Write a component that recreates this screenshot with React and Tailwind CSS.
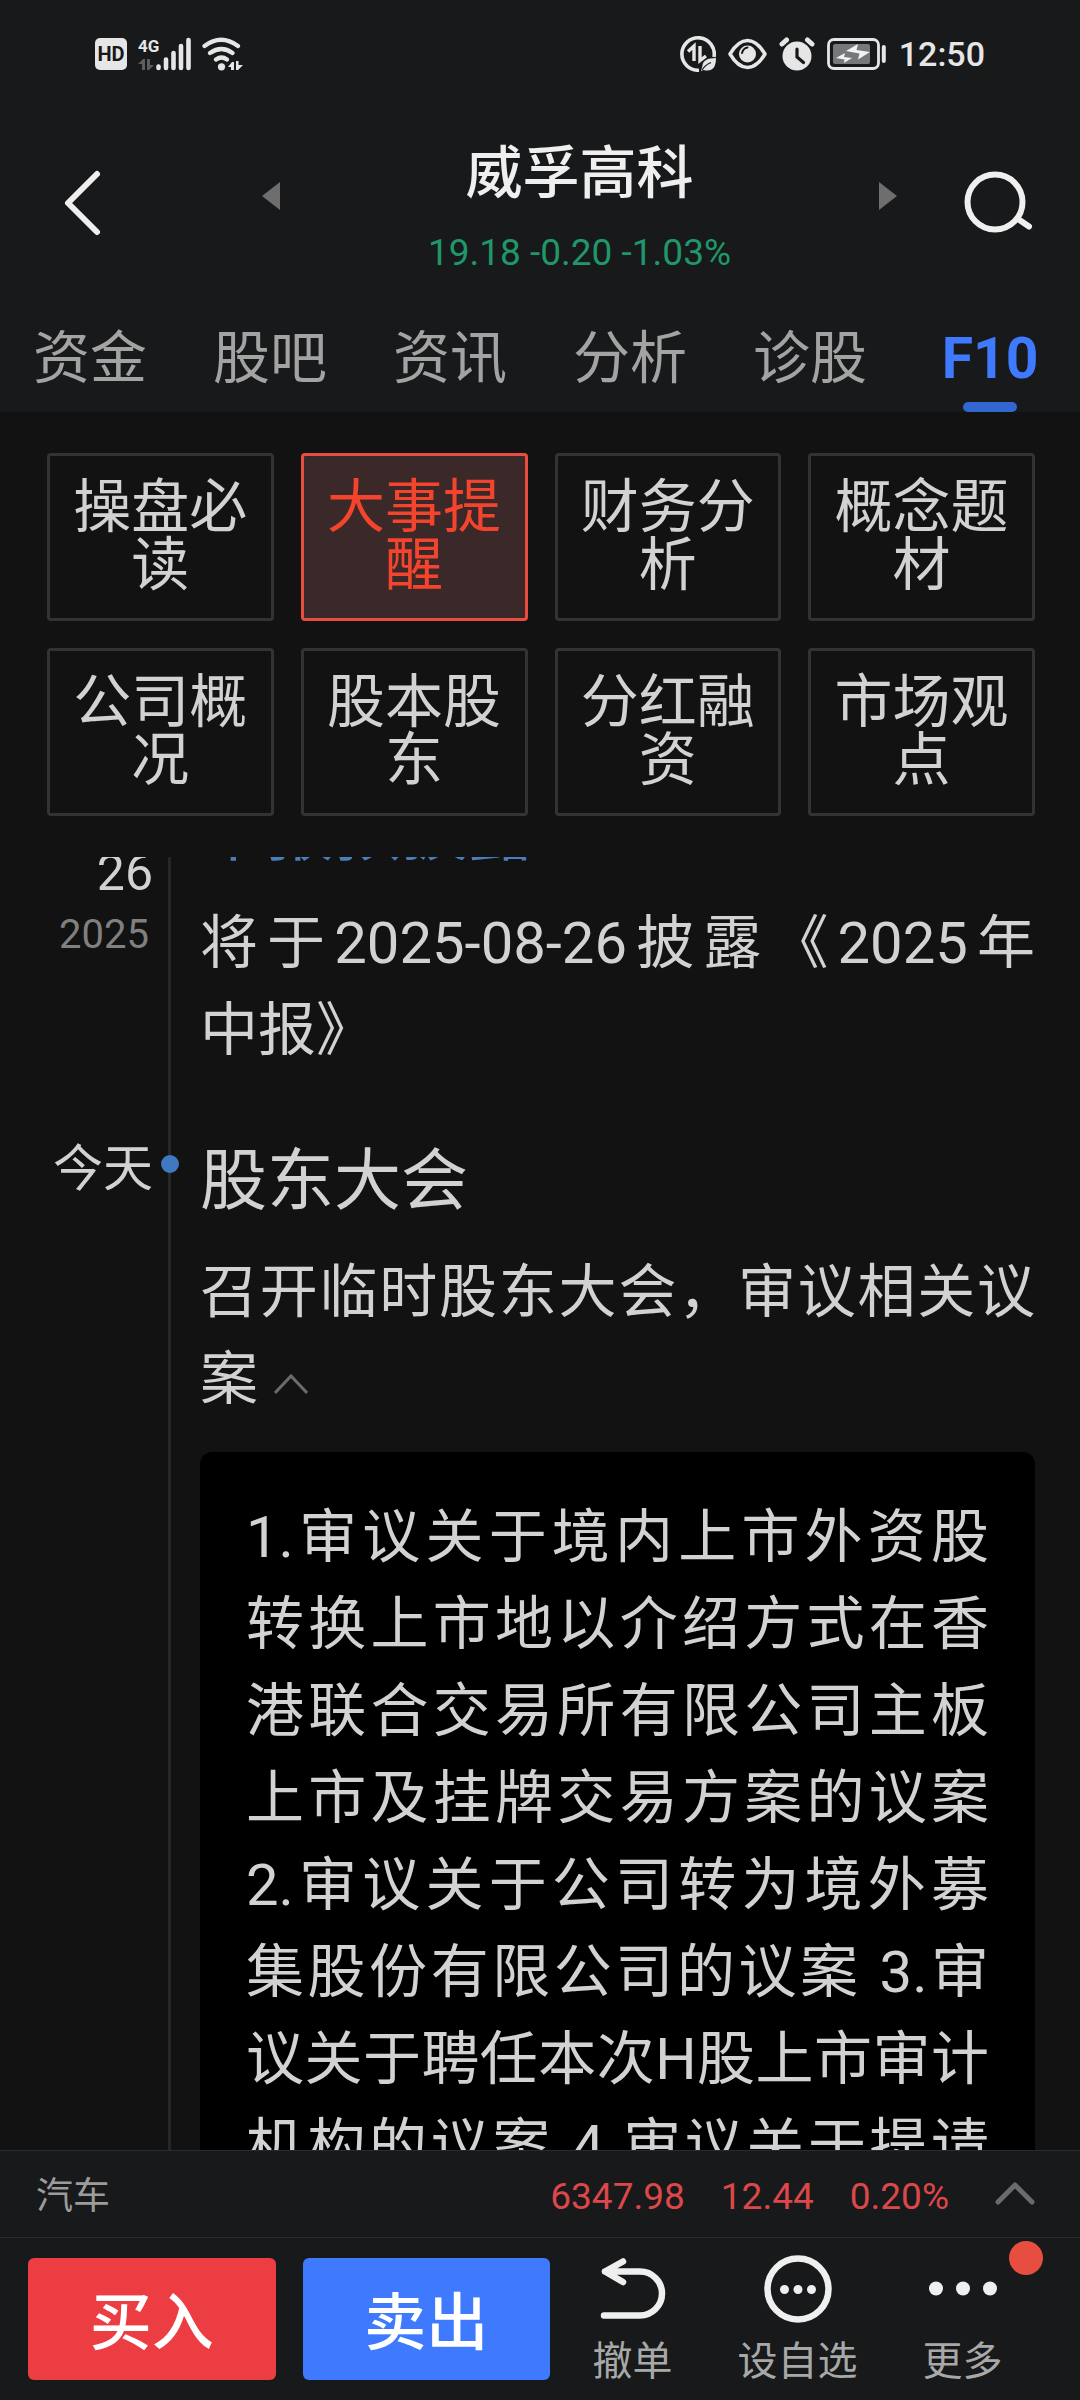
import React, { useLayoutEffect, useRef, useState } from 'react';

const tabs = ['资金', '股吧', '资讯', '分析', '诊股', 'F10'];

const sections = [
  '操盘必读', '大事提醒', '财务分析', '概念题材',
  '公司概况', '股本股东', '分红融资', '市场观点',
];

const meetingDetail =
  '1.审议关于境内上市外资股转换上市地以介绍方式在香港联合交易所有限公司主板上市及挂牌交易方案的议案 ' +
  '2.审议关于公司转为境外募集股份有限公司的议案 3.审议关于聘任本次H股上市审计机构的议案 4.审议关于提请';

function StatusBar() {
  return (
    <div className="flex items-center justify-between h-[108px] pl-[95px] pr-[95px] text-[#e6e6e6]">
      <div className="flex items-center gap-[11px]">
        <svg width="32" height="32" viewBox="0 0 32 32">
          <rect width="32" height="32" rx="5" fill="#e6e6e6" />
          <text x="16" y="23" textAnchor="middle" fontSize="20" fontWeight="700" fill="#17191a">HD</text>
        </svg>

        {/* Mobile signal */}
        <svg width="53" height="34" viewBox="0 0 53 34">
          <text x="0" y="15" fontSize="17" fontWeight="700" fill="#e6e6e6">4G</text>
          <path d="M0 27l5-5h2v11H4v-6zM9 22h3v6h4l-5 5H9z" fill="#5c5d5e" />
          <g stroke="#e6e6e6" strokeWidth="4.6" strokeLinecap="round">
            <path d="M20.500 29.500v1.500M28 22.500v8.500M35.500 16v15M43 9v22M50.500 3v28" />
          </g>
        </svg>

        {/* Wifi */}
        <svg width="41" height="34" viewBox="0 0 41 34">
          <g fill="none" stroke="#e6e6e6" strokeWidth="4.200" strokeLinecap="round">
            <path d="M2.500 9Q19 -3.500 36 9M8 16q11.500-8 22.500 0M14 22.500q5.500-4 11 0" />
          </g>
          <circle cx="19.500" cy="29.800" r="3.600" fill="#e6e6e6" />
          <path d="M26 30l4-5h2v8h-3v-3zM34 24h2.500v4H41l-5 5h-2z" fill="#e6e6e6" />
        </svg>
      </div>

      <div className="flex items-center gap-[12px]">
        {/* Data saver */}
        <svg width="36" height="36" viewBox="0 0 36 36">
          <path d="M34 21A16.200 16.200 0 1 0 19 34.200" fill="none" stroke="#e6e6e6" strokeWidth="3.600" />
          <path d="M8 15.500L14 10v15M20 10v14.500l6-4.500" fill="none" stroke="#e6e6e6" strokeWidth="3.400" />
          <path d="M36 22q-13 0-13.500 7.500L21 35l2.500-1Q36 37 36 22z" fill="#e6e6e6" />
          <path d="M22 34q3-5 9-7.500" stroke="#17191a" strokeWidth="1.200" fill="none" />
        </svg>
        <svg width="39" height="32" viewBox="0 0 39 32">
          <path d="M2 16Q10 2.500 19.500 2.500T37 16Q29 29.500 19.500 29.500T2 16z" fill="none" stroke="#e6e6e6" strokeWidth="3.500" strokeLinejoin="round" />
          <circle cx="19.500" cy="16" r="8.500" fill="#e6e6e6" />
          <path d="M14 15q1-4.500 5.500-5.500" fill="none" stroke="#17191a" strokeWidth="2" strokeLinecap="round" />
        </svg>
        <svg width="36" height="34" viewBox="0 0 36 34">
          <circle cx="18" cy="19" r="14.500" fill="#e6e6e6" />
          <path d="M3 7l4.500-4M33 7l-4.500-4" stroke="#e6e6e6" strokeWidth="5" strokeLinecap="round" />
          <path d="M18 12v8l6.500 5.500" fill="none" stroke="#17191a" strokeWidth="3.200" strokeLinecap="round" />
        </svg>
        {/* Battery */}
        <svg width="60" height="32" viewBox="0 0 60 32">
          <rect x="1.500" y="1.500" width="50" height="29" rx="5.500" fill="none" stroke="#e6e6e6" strokeWidth="2.800" />
          <rect x="6" y="6" width="37" height="20" rx="2" fill="#77787a" />
          <path d="M56.800 9v14" stroke="#e6e6e6" strokeWidth="4" strokeLinecap="round" />
          <path d="M31 6l-1.500 6L43 14l-12 7.500 1.500-6L19 13zM18 15l-1 4 8 1-8 5 .500-3.500L9 20z" fill="#f2f2f2" />
        </svg>
        <span className="text-[34px] leading-[40px] font-medium">12:50</span>
      </div>
    </div>
  );
}

function Header({ tab, setTab }) {
  return (
    <header className="bg-[#17191a]">
      <StatusBar />
      <div className="flex items-center pl-[62px] pr-[46px] h-[190px]">
        <button aria-label="返回">
          <svg width="40" height="68" viewBox="0 0 40 68" fill="none" stroke="#efefef" strokeWidth="6" strokeLinecap="round" strokeLinejoin="round">
            <path d="M35 5L6 34l29 29" />
          </svg>
        </button>

        <div className="flex items-center justify-between flex-1 ml-[160px] mr-[67px]">
          <button aria-label="上一只" className="mb-[14px]">
            <svg width="18" height="28" viewBox="0 0 18 28"><path d="M18 0v28L0 14z" fill="#6e6e6e" /></svg>
          </button>
          <div className="flex flex-col items-center pt-[4px]">
            <h1 className="text-[57px] leading-[76px] font-medium text-[#efefef]">威孚高科</h1>
            <p className="mt-[19px] text-[37px] leading-[44px] text-[#20976a]">19.18 -0.20 -1.03%</p>
          </div>
          <button aria-label="下一只" className="mb-[14px]">
            <svg width="18" height="28" viewBox="0 0 18 28"><path d="M0 0v28l18-14z" fill="#6e6e6e" /></svg>
          </button>
        </div>

        <button aria-label="搜索">
          <svg width="70" height="64" viewBox="0 0 70 64" fill="none" stroke="#efefef" strokeWidth="6" strokeLinecap="round">
            <circle cx="31" cy="31" r="27.500" />
            <path d="M54 48l11 7.500" />
          </svg>
        </button>
      </div>

      <nav className="grid grid-cols-6 h-[114px]">
        {tabs.map((name) => (
          <button
            key={name}
            onClick={() => setTab(name)}
            className={
              tab === name
                ? 'flex flex-col items-center justify-between pt-[23px] text-[57px] leading-[76px] font-bold text-[#3f7afe]'
                : 'flex flex-col items-center justify-between pt-[23px] text-[57px] leading-[76px] text-[#a3a3a3]'
            }
          >
            {name}
            {tab === name && <span className="w-[54px] h-[10px] rounded-full bg-[#3266d0]" />}
          </button>
        ))}
      </nav>
    </header>
  );
}

function TimelineItem({ date, year, dot, children }) {
  return (
    <li className="flex">
      <div className="w-[168px] flex-shrink-0 pt-[8px] pr-[15px] text-right text-[50px] leading-[53px] text-[#d2d2d2]">
        {date.map((part) => (
          <div key={part}>{part}</div>
        ))}
        {year && <div className="mt-[8px] pr-[4px] text-[40px] text-[#808080]">{year}</div>}
      </div>
      <div className="relative flex-1 min-w-0 border-l-[3px] border-[#272727] pl-[29px] pr-[45px] pt-[3px] pb-[61px]">
        {dot && <span className="absolute -left-[10px] top-[20px] size-[18px] rounded-full bg-[#3f79bf]" />}
        {children}
      </div>
    </li>
  );
}

function Timeline() {
  const scroller = useRef(null);
  const [open, setOpen] = useState(true);

  useLayoutEffect(() => {
    scroller.current.scrollTop = 71;
  }, []);

  return (
    <div ref={scroller} className="flex-1 min-h-0 overflow-y-auto [scrollbar-width:none]">
      <ul>
        <TimelineItem date={['08-', '26']} year="2025">
          <h2 className="text-[67px] leading-[87px] text-[#4a7db9]">中报预披露</h2>
          <p className="mt-[24px] text-[58px] leading-[87px] text-justify">
            将于2025-08-26披露《2025年<span className="inline-block">中报》</span>
          </p>
        </TimelineItem>

        <TimelineItem date={['今天']} dot>
          <h2 className="text-[67px] leading-[87px]">股东大会</h2>
          <p className="mt-[24px] text-[58px] leading-[87px] text-justify">
            召开临时股东大会，审议相关议案
            <button aria-label="展开或收起" onClick={() => setOpen(!open)} className="ml-4">
              <svg width="34" height="22" viewBox="0 0 34 22" fill="none" stroke="#6a6a6a" strokeWidth="3" className={open ? 'inline' : 'inline rotate-180'}>
                <path d="M1 20L17 3l16 17" />
              </svg>
            </button>
          </p>
          {open && (
            <p className="mt-[29px] py-[42px] px-[46px] rounded-xl bg-black text-[58px] leading-[87px] text-justify [text-align-last:justify]">
              {meetingDetail}
            </p>
          )}
        </TimelineItem>
      </ul>
    </div>
  );
}

function IndexBar() {
  return (
    <div className="flex items-center justify-between h-[87px] pt-[6px] pl-[36px] pr-[45px] border-t border-[#2a2b2c]">
      <span className="text-[37px] text-[#9c9c9c]">汽车</span>
      <div className="flex items-center gap-[36px] text-[37px] text-[#dc474a]">
        <span>6347.98</span>
        <span>12.44</span>
        <span>0.20%</span>
        <button aria-label="展开指数" className="ml-[10px] mb-[8px]">
          <svg width="40" height="24" viewBox="0 0 40 24" fill="none" stroke="#6b6b6b" strokeWidth="5" strokeLinecap="round" strokeLinejoin="round">
            <path d="M3 21L20 4l17 17" />
          </svg>
        </button>
      </div>
    </div>
  );
}

function ActionBar() {
  return (
    <div className="flex items-start h-[163px] pt-[17px] pl-[28px] pr-[35px] border-t border-[#2a2b2c]">
      <button className="flex-3 mt-[3px] mr-[27px] h-[122px] pt-[8px] rounded-md bg-[#ec3d42] text-white text-[62px] font-medium">买入</button>
      <button className="flex-3 mt-[3px] h-[122px] pt-[8px] rounded-md bg-[#3f7afe] text-white text-[62px] font-medium">卖出</button>

      <button className="flex-2 flex flex-col items-center text-[40px] leading-[48px] text-[#a8a8a8]">
        <svg width="68" height="68" viewBox="0 0 68 68" fill="none" stroke="#efefef" strokeWidth="6.500" strokeLinecap="round" strokeLinejoin="round" className="mb-[15px]">
          <path d="M5 60.500H41a22 22 0 0 0 0-44H6M24 6.500L6 16.500l18 10.500" />
        </svg>
        撤单
      </button>

      <button className="flex-2 flex flex-col items-center text-[40px] leading-[48px] text-[#a8a8a8]">
        <svg width="68" height="68" viewBox="0 0 68 68" fill="#efefef" className="mb-[15px]">
          <circle cx="34" cy="34" r="30.500" fill="none" stroke="#efefef" strokeWidth="6.500" />
          <circle cx="20.500" cy="34.500" r="4.500" />
          <circle cx="34" cy="34.500" r="4.500" />
          <circle cx="47.500" cy="34.500" r="4.500" />
        </svg>
        设自选
      </button>

      <button className="relative flex-2 flex flex-col items-center text-[40px] leading-[48px] text-[#a8a8a8]">
        <svg width="68" height="68" viewBox="0 0 68 68" fill="#efefef" className="mb-[15px]">
          <circle cx="7" cy="33.500" r="7" />
          <circle cx="34" cy="33.500" r="7" />
          <circle cx="61" cy="33.500" r="7" />
        </svg>
        更多
        <span className="absolute -top-[14px] right-[2px] size-[34px] rounded-full bg-[#e84e40]" />
      </button>
    </div>
  );
}

function App() {
  const [tab, setTab] = useState('F10');
  const [section, setSection] = useState('大事提醒');

  return (
    <div
      lang="zh-CN"
      className="flex flex-col h-screen bg-[#121212] text-[#d2d2d2] font-['Roboto','Noto_Sans_CJK_SC',sans-serif]"
    >
      <Header tab={tab} setTab={setTab} />

      <div className="grid grid-cols-4 gap-[27px] pt-[41px] pb-[41px] pl-[47px] pr-[45px]">
        {sections.map((name) => (
          <button
            key={name}
            onClick={() => setSection(name)}
            className={
              section === name
                ? 'px-[20px] pt-[22px] pb-[24px] border-[3px] border-[#e84e40] rounded-sm bg-[#3b2829] text-[58px] leading-[58px] text-[#f4442e]'
                : 'px-[20px] pt-[22px] pb-[24px] border-[3px] border-[#333333] rounded-sm text-[58px] leading-[58px]'
            }
          >
            {name}
          </button>
        ))}
      </div>

      <Timeline />

      <footer className="bg-[#17191a]">
        <IndexBar />
        <ActionBar />
      </footer>
    </div>
  );
}

export default App;
